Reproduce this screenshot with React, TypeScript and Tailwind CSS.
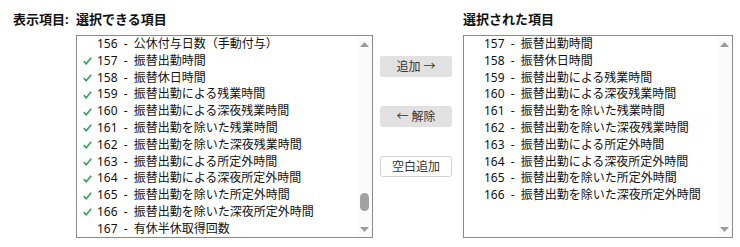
import React from "react";

type Item = { n: number; t: string; c: boolean };

const leftItems: Item[] = [
  { n: 156, t: "公休付与日数（手動付与）", c: false },
  { n: 157, t: "振替出勤時間", c: true },
  { n: 158, t: "振替休日時間", c: true },
  { n: 159, t: "振替出勤による残業時間", c: true },
  { n: 160, t: "振替出勤による深夜残業時間", c: true },
  { n: 161, t: "振替出勤を除いた残業時間", c: true },
  { n: 162, t: "振替出勤を除いた深夜残業時間", c: true },
  { n: 163, t: "振替出勤による所定外時間", c: true },
  { n: 164, t: "振替出勤による深夜所定外時間", c: true },
  { n: 165, t: "振替出勤を除いた所定外時間", c: true },
  { n: 166, t: "振替出勤を除いた深夜所定外時間", c: true },
  { n: 167, t: "有休半休取得回数", c: false },
];

const rightItems: Item[] = leftItems.filter((i) => i.c).map((i) => ({ ...i, c: false }));

function Check() {
  return (
    <svg width="9" height="8" viewBox="0 0 9 8" className="block">
      <polyline points="0.8,4.2 3.2,6.8 8.2,0.8" fill="none" stroke="#3aa360" strokeWidth="1.7" />
    </svg>
  );
}

function Up() {
  return (
    <svg width="9" height="5" viewBox="0 0 9 5" className="block">
      <polygon points="4.5,0 9,5 0,5" fill="#9c9c9c" />
    </svg>
  );
}

function Down() {
  return (
    <svg width="9" height="5" viewBox="0 0 9 5" className="block">
      <polygon points="0,0 9,0 4.5,5" fill="#9c9c9c" />
    </svg>
  );
}

function Row({ item }: { item: Item }) {
  return (
    <div className="flex items-center h-[16.8px] leading-[16.8px] whitespace-nowrap">
      <div className="w-[20px] pl-[6px] flex items-center">{item.c ? <Check /> : null}</div>
      <span className="[word-spacing:3px]">
        {item.n} - {item.t}
      </span>
    </div>
  );
}

function ListBox({ items, width, thumb }: { items: Item[]; width: string; thumb: boolean }) {
  return (
    <div className={`${width} h-[203px] border border-[#8a8a8a] bg-white flex overflow-hidden`}>
      <div className="flex-1 overflow-hidden text-[12px] text-[#111]">
        <div>
          {items.map((it) => (
            <Row key={it.n} item={it} />
          ))}
        </div>
      </div>
      <div className="w-[15px] bg-[#fbfbfb] flex flex-col items-center">
        <div className="mt-[6px]">
          <Up />
        </div>
        <div className="flex-1">
          {thumb ? <div className="mt-[146px] w-[9px] h-[18px] rounded-full bg-[#a2a2a2]" /> : null}
        </div>
        <div className="mb-[5px]">
          <Down />
        </div>
      </div>
    </div>
  );
}

export default function App() {
  return (
    <div className="flex pt-[9px] pl-[13px] font-['Noto_Sans','Noto_Sans_CJK_JP',sans-serif] text-[#111] bg-white w-[740px] h-[247px]">
      <div className="w-[63px] text-[13px] font-bold leading-[20px]">表示項目:</div>
      <div className="flex flex-col w-[297px]">
        <div className="text-[13px] font-bold leading-[20px] mb-[6px]">選択できる項目</div>
        <ListBox items={leftItems} width="w-[297px]" thumb={true} />
      </div>
      <div className="ml-[7px] mr-[11px] w-[72px] mt-[47px] flex flex-col gap-[29px] text-[12px] text-[#333]">
        <button className="h-[21px] w-[72px] rounded-[3px] bg-[#e1e1e1] flex items-center justify-center leading-none">
          追加 →
        </button>
        <button className="h-[21px] w-[72px] rounded-[3px] bg-[#e1e1e1] flex items-center justify-center leading-none">
          ← 解除
        </button>
        <button className="h-[21px] w-[72px] rounded-[3px] bg-white border border-[#d4d4d4] flex items-center justify-center leading-none">
          空白追加
        </button>
      </div>
      <div className="flex flex-col w-[270px]">
        <div className="text-[13px] font-bold leading-[20px] mb-[6px]">選択された項目</div>
        <ListBox items={rightItems} width="w-[270px]" thumb={false} />
      </div>
    </div>
  );
}
